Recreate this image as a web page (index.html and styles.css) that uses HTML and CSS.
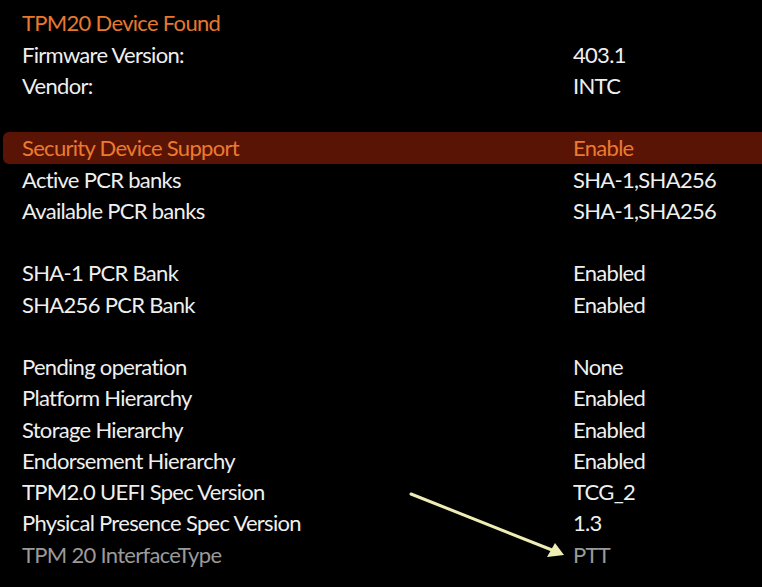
FILE: index.html
```html
<!DOCTYPE html>
<html>
<head>
<meta charset="utf-8">
<link rel="stylesheet" href="styles.css">
</head>
<body>
<div class="screen">
  <div class="row title"><span class="label">TPM20 Device Found</span><span class="value"></span></div>
  <div class="row"><span class="label">Firmware Version:</span><span class="value">403.1</span></div>
  <div class="row"><span class="label">Vendor:</span><span class="value">INTC</span></div>
  <div class="row blank"></div>
  <div class="row selected"><span class="label">Security Device Support</span><span class="value">Enable</span></div>
  <div class="row"><span class="label">Active PCR banks</span><span class="value">SHA-1,SHA256</span></div>
  <div class="row"><span class="label">Available PCR banks</span><span class="value">SHA-1,SHA256</span></div>
  <div class="row blank"></div>
  <div class="row"><span class="label">SHA-1 PCR Bank</span><span class="value">Enabled</span></div>
  <div class="row"><span class="label">SHA256 PCR Bank</span><span class="value">Enabled</span></div>
  <div class="row blank"></div>
  <div class="row"><span class="label">Pending operation</span><span class="value">None</span></div>
  <div class="row"><span class="label">Platform Hierarchy</span><span class="value">Enabled</span></div>
  <div class="row"><span class="label">Storage Hierarchy</span><span class="value">Enabled</span></div>
  <div class="row"><span class="label">Endorsement Hierarchy</span><span class="value">Enabled</span></div>
  <div class="row"><span class="label">TPM2.0 UEFI Spec Version</span><span class="value">TCG_2</span></div>
  <div class="row"><span class="label">Physical Presence Spec Version</span><span class="value">1.3</span></div>
  <div class="row dim"><span class="label">TPM 20 InterfaceType</span><span class="value">PTT</span></div>
  <svg class="arrow" width="762" height="587" viewBox="0 0 762 587">
    <line x1="411" y1="494" x2="552" y2="550" stroke="#eeeeb4" stroke-width="3" stroke-linecap="round"/>
    <polygon points="564,555 547,557 555,543" fill="#eeeeb4"/>
  </svg>
</div>
</body>
</html>
```
FILE: styles.css
```css
html, body {
  margin: 0;
  padding: 0;
  background: #000;
}
.screen {
  position: relative;
  width: 762px;
  height: 587px;
  overflow: hidden;
  background: #000;
  padding-top: 7.4px;
  box-sizing: border-box;
  font-family: "Lato", "Open Sans", sans-serif;
  font-size: 22px;
  letter-spacing: -0.7px;
  color: #efefef;
}
.row {
  display: grid;
  grid-template-columns: 551px 1fr;
  height: 31.25px;
  line-height: 31.25px;
  padding-left: 22px;
  white-space: nowrap;
}
.title {
  color: #e8782e;
}
.selected {
  margin-left: 3px;
  padding-left: 19px;
  background: #5a1405;
  border-radius: 6px 0 0 6px;
  color: #ec7a2e;
}
.dim {
  color: #9a9a9a;
}
.arrow {
  position: absolute;
  left: 0;
  top: 0;
  pointer-events: none;
}
```
